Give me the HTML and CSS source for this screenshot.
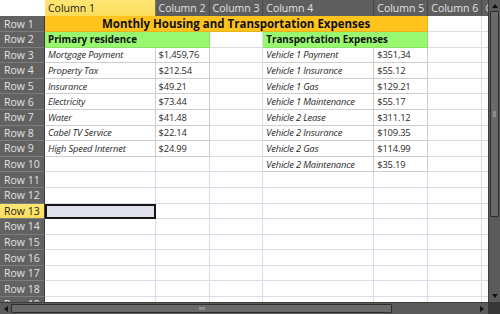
FILE: index.html
```html
<!DOCTYPE html>
<html lang="en">
<head>
  <meta charset="UTF-8">
  <title>Monthly Housing and Transportation Expenses</title>
  <link rel="stylesheet" href="styles.css">
</head>
<body>
  <div class="workbook">
    <div class="viewport">
      <div class="sheet">
        <!-- column headers -->
        <div class="corner"></div>
        <div class="colhead active">Column 1</div>
        <div class="colhead">Column 2</div>
        <div class="colhead">Column 3</div>
        <div class="colhead">Column 4</div>
        <div class="colhead">Column 5</div>
        <div class="colhead">Column 6</div>
        <div class="colhead">Column 7</div>

        <!-- Row 1 -->
        <div class="rowhead">Row 1</div>
        <div class="cell title">Monthly Housing and Transportation Expenses</div>
        <div class="cell"></div>
        <div class="cell"></div>

        <!-- Row 2 -->
        <div class="rowhead">Row 2</div>
        <div class="cell section">Primary residence</div>
        <div class="cell"></div>
        <div class="cell section">Transportation Expenses</div>
        <div class="cell"></div>
        <div class="cell"></div>

        <!-- Row 3 -->
        <div class="rowhead">Row 3</div>
        <div class="cell label">Mortgage Payment</div>
        <div class="cell value">$1,459,76</div>
        <div class="cell"></div>
        <div class="cell label">Vehicle 1 Payment</div>
        <div class="cell value">$351,34</div>
        <div class="cell"></div>
        <div class="cell"></div>

        <!-- Row 4 -->
        <div class="rowhead">Row 4</div>
        <div class="cell label">Property Tax</div>
        <div class="cell value">$212.54</div>
        <div class="cell"></div>
        <div class="cell label">Vehicle 1 Insurance</div>
        <div class="cell value">$55.12</div>
        <div class="cell"></div>
        <div class="cell"></div>

        <!-- Row 5 -->
        <div class="rowhead">Row 5</div>
        <div class="cell label">Insurance</div>
        <div class="cell value">$49.21</div>
        <div class="cell"></div>
        <div class="cell label">Vehicle 1 Gas</div>
        <div class="cell value">$129.21</div>
        <div class="cell"></div>
        <div class="cell"></div>

        <!-- Row 6 -->
        <div class="rowhead">Row 6</div>
        <div class="cell label">Electricity</div>
        <div class="cell value">$73.44</div>
        <div class="cell"></div>
        <div class="cell label">Vehicle 1 Maintenance</div>
        <div class="cell value">$55.17</div>
        <div class="cell"></div>
        <div class="cell"></div>

        <!-- Row 7 -->
        <div class="rowhead">Row 7</div>
        <div class="cell label">Water</div>
        <div class="cell value">$41.48</div>
        <div class="cell"></div>
        <div class="cell label">Vehicle 2 Lease</div>
        <div class="cell value">$311.12</div>
        <div class="cell"></div>
        <div class="cell"></div>

        <!-- Row 8 -->
        <div class="rowhead">Row 8</div>
        <div class="cell label">Cabel TV Service</div>
        <div class="cell value">$22.14</div>
        <div class="cell"></div>
        <div class="cell label">Vehicle 2 Insurance</div>
        <div class="cell value">$109.35</div>
        <div class="cell"></div>
        <div class="cell"></div>

        <!-- Row 9 -->
        <div class="rowhead">Row 9</div>
        <div class="cell label">High Speed Internet</div>
        <div class="cell value">$24.99</div>
        <div class="cell"></div>
        <div class="cell label">Vehicle 2 Gas</div>
        <div class="cell value">$114.99</div>
        <div class="cell"></div>
        <div class="cell"></div>

        <!-- Row 10 -->
        <div class="rowhead">Row 10</div>
        <div class="cell"></div>
        <div class="cell"></div>
        <div class="cell"></div>
        <div class="cell label">Vehicle 2 Maintenance</div>
        <div class="cell value">$35.19</div>
        <div class="cell"></div>
        <div class="cell"></div>

        <!-- Row 11 -->
        <div class="rowhead">Row 11</div>
        <div class="cell"></div><div class="cell"></div><div class="cell"></div><div class="cell"></div>
        <div class="cell"></div><div class="cell"></div><div class="cell"></div>

        <!-- Row 12 -->
        <div class="rowhead">Row 12</div>
        <div class="cell"></div><div class="cell"></div><div class="cell"></div><div class="cell"></div>
        <div class="cell"></div><div class="cell"></div><div class="cell"></div>

        <!-- Row 13 -->
        <div class="rowhead active">Row 13</div>
        <div class="cell selected"></div><div class="cell"></div><div class="cell"></div><div class="cell"></div>
        <div class="cell"></div><div class="cell"></div><div class="cell"></div>

        <!-- Row 14 -->
        <div class="rowhead">Row 14</div>
        <div class="cell"></div><div class="cell"></div><div class="cell"></div><div class="cell"></div>
        <div class="cell"></div><div class="cell"></div><div class="cell"></div>

        <!-- Row 15 -->
        <div class="rowhead">Row 15</div>
        <div class="cell"></div><div class="cell"></div><div class="cell"></div><div class="cell"></div>
        <div class="cell"></div><div class="cell"></div><div class="cell"></div>

        <!-- Row 16 -->
        <div class="rowhead">Row 16</div>
        <div class="cell"></div><div class="cell"></div><div class="cell"></div><div class="cell"></div>
        <div class="cell"></div><div class="cell"></div><div class="cell"></div>

        <!-- Row 17 -->
        <div class="rowhead">Row 17</div>
        <div class="cell"></div><div class="cell"></div><div class="cell"></div><div class="cell"></div>
        <div class="cell"></div><div class="cell"></div><div class="cell"></div>

        <!-- Row 18 -->
        <div class="rowhead">Row 18</div>
        <div class="cell"></div><div class="cell"></div><div class="cell"></div><div class="cell"></div>
        <div class="cell"></div><div class="cell"></div><div class="cell"></div>

        <!-- Row 19 -->
        <div class="rowhead">Row 19</div>
        <div class="cell"></div><div class="cell"></div><div class="cell"></div><div class="cell"></div>
        <div class="cell"></div><div class="cell"></div><div class="cell"></div>
      </div>
    </div>

    <!-- vertical scrollbar -->
    <div class="vscroll">
      <span class="arrow up"></span>
      <div class="vthumb"><span class="grip"></span></div>
      <span class="arrow down"></span>
    </div>

    <!-- horizontal scrollbar -->
    <div class="hscroll">
      <span class="arrow left"></span>
      <div class="hthumb"><span class="grip"></span></div>
      <span class="arrow right"></span>
    </div>
    <div class="scroll-corner"></div>
  </div>
</body>
</html>
```

FILE: styles.css
```css
body {
  margin: 0;
  padding: 0;
  background: #ffffff;
  font-family: "Open Sans", "Noto Sans", sans-serif;
}

.workbook {
  display: grid;
  grid-template-columns: 488px 12px;
  grid-template-rows: 302px 12px;
  width: 500px;
  height: 314px;
}

.viewport {
  overflow: hidden;
  background: #ffffff;
}

.sheet {
  display: grid;
  grid-template-columns: 45px 110.6px 54px 53.7px 111px 54px 54.2px 60px;
  grid-template-rows: 16.4px repeat(19, 15.6px);
  width: max-content;
}

.sheet > div {
  box-sizing: border-box;
  white-space: nowrap;
  overflow: hidden;
  display: flex;
  align-items: center;
}

.corner {
  background: #ffffff;
}

.colhead {
  background: #5e5e5e;
  color: #e2e2e2;
  font-size: 10.5px;
  padding-left: 3px;
  border-right: 1px solid #484848;
}

.colhead.active {
  background: linear-gradient(#fde774, #fcdc5c);
  color: #1d1d1d;
  border-right-color: #8a7a3a;
}

.rowhead {
  background: #626262;
  color: #e2e2e2;
  font-size: 10.5px;
  padding-left: 4px;
  border-bottom: 1px solid #7c7c7c;
  border-right: 1px solid #3c3c3c;
}

.rowhead.active {
  background: linear-gradient(#fde774, #fcdc5c);
  color: #1d1d1d;
}

.cell {
  border-right: 1px solid #dcdce9;
  border-bottom: 1px solid #dcdce9;
  font-size: 9.4px;
  letter-spacing: -0.2px;
  color: #2a2a2a;
  padding-left: 3px;
}

.title {
  grid-column: span 5;
  justify-content: center;
  background: #fec31c;
  border-color: #e9b31a;
  font-size: 11.5px;
  font-weight: bold;
  letter-spacing: 0;
  color: #111111;
  padding-left: 0;
}

.section {
  grid-column: span 2;
  background: #98f870;
  border-color: #8ce466;
  font-weight: bold;
  font-size: 9.8px;
  letter-spacing: 0;
  color: #111111;
}

.label {
  font-style: italic;
  border-color: #cdcdcd;
}

.value {
  border-color: #cdcdcd;
}

.selected {
  background: #dfe0ea;
  border: 2px solid #151515;
}

/* scrollbars */
.vscroll,
.hscroll {
  background: #5b5b5b;
  display: flex;
  align-items: center;
}

.vscroll {
  flex-direction: column;
  border-left: 1px solid #3e3e3e;
  box-sizing: border-box;
}

.hscroll {
  border-top: 1px solid #3e3e3e;
  box-sizing: border-box;
}

.scroll-corner {
  background: #363636;
}

.arrow {
  width: 0;
  height: 0;
  flex: none;
}

.arrow.up {
  margin: 4px 0 3px;
  border-left: 3px solid transparent;
  border-right: 3px solid transparent;
  border-bottom: 4px solid #111111;
}

.arrow.down {
  margin: auto 0 4px;
  border-left: 3px solid transparent;
  border-right: 3px solid transparent;
  border-top: 4px solid #111111;
}

.arrow.left {
  margin: 0 3px 0 4px;
  border-top: 3px solid transparent;
  border-bottom: 3px solid transparent;
  border-right: 4px solid #111111;
}

.arrow.right {
  margin: 0 4px 0 auto;
  border-top: 3px solid transparent;
  border-bottom: 3px solid transparent;
  border-left: 4px solid #111111;
}

.vthumb {
  width: 9px;
  height: 206px;
  box-sizing: border-box;
  background: #6a6a6a;
  border: 1px solid #2e2e2e;
  border-radius: 1px;
  display: flex;
  align-items: center;
  justify-content: center;
}

.hthumb {
  width: 381px;
  height: 9px;
  box-sizing: border-box;
  background: #6a6a6a;
  border: 1px solid #2e2e2e;
  border-radius: 1px;
  display: flex;
  align-items: center;
  justify-content: center;
}

.vthumb .grip {
  width: 3px;
  height: 6px;
  background: #8c8c8c;
}

.hthumb .grip {
  width: 6px;
  height: 3px;
  background: #8c8c8c;
}
```
